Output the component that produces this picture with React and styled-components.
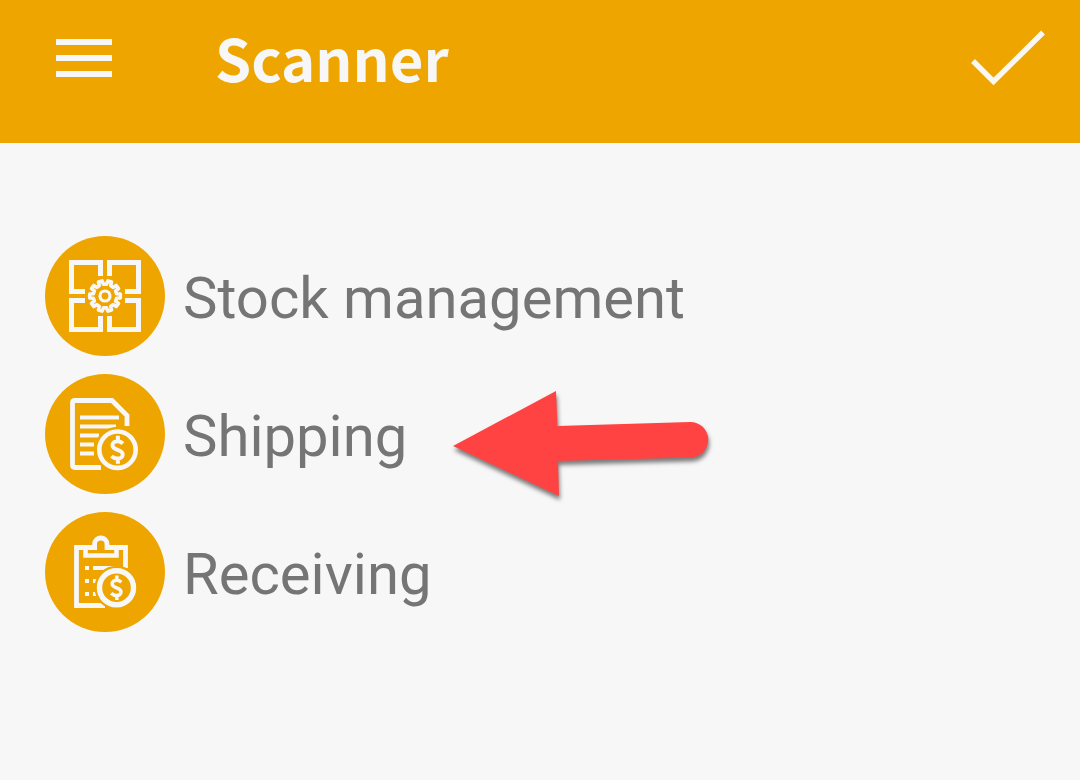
import React from "react";
import styled, { createGlobalStyle } from "styled-components";

const amber = "#efa500";
const paper = "#f7f7f7";

const GlobalStyle = createGlobalStyle`
  *, *::before, *::after { box-sizing: border-box; }
  body { margin: 0; background: ${paper}; }
`;

const Page = styled.div`
  min-height: 100vh;
  background: ${paper};
  font-family: Roboto, sans-serif;
`;

const TopBar = styled.header`
  display: flex;
  align-items: flex-start;
  min-height: 143px;
  padding: 16px 32px 0 44px;
  background: ${amber};
  color: ${paper};
`;

const IconButton = styled.button`
  display: flex;
  align-items: center;
  justify-content: center;
  width: 80px;
  height: 84px;
  padding: 0;
  border: 0;
  background: none;
  color: inherit;
  cursor: pointer;
`;

const Title = styled.h1`
  flex: 1;
  margin: 0;
  padding-left: 91px;
  font: 700 58px/82px "Noto Sans CJK JP", sans-serif;
`;

const Menu = styled.ul`
  display: flex;
  flex-direction: column;
  gap: 18px;
  margin: 0;
  padding: 93px 45px;
  list-style: none;
`;

const MenuItem = styled.li`
  display: flex;
  align-items: center;
  gap: 46px;
`;

const MenuLink = styled.a`
  display: flex;
  align-items: center;
  gap: 18px;
  color: #757575;
  font-size: 58px;
  line-height: 120px;
  text-decoration: none;
`;

const Badge = styled.span`
  display: block;
  width: 120px;
  height: 120px;
  border-radius: 50%;
  background: ${amber};
`;

const Label = styled.span`
  padding-top: 4px;
  line-height: 116px;
`;

const Pointer = styled.svg`
  flex: none;
  overflow: visible;
  filter: drop-shadow(1px 4px 2px rgba(0, 0, 0, 0.5));
`;

function gearPath(cx, cy, teeth, outer, inner) {
  const step = (Math.PI * 2) / teeth;
  const points = [];
  for (let i = 0; i < teeth; i += 1) {
    const a = i * step;
    [
      [-0.3, inner],
      [-0.2, outer],
      [0.2, outer],
      [0.3, inner],
    ].forEach(([f, r]) => {
      points.push(
        `${(cx + r * Math.cos(a + f * step)).toFixed(2)} ${(cy + r * Math.sin(a + f * step)).toFixed(2)}`
      );
    });
  }
  return `M${points.join("L")}Z`;
}

const Glyph = ({ children }) => (
  <svg width="120" height="120" viewBox="0 0 120 120" fill="none" stroke={paper} strokeWidth="5" aria-hidden="true">
    {children}
  </svg>
);

const StockIcon = () => (
  <Glyph>
    <path d="M40 55.5H26.5V26.5H55.5V40M64.5 40V26.5H93.5V55.5H80M40 64.5H26.5V93.5H55.5V80M64.5 80V93.5H93.5V64.5H80" />
    <path d={gearPath(60, 60, 10, 15.4, 11.8)} strokeWidth="3.6" strokeLinejoin="round" />
    <circle cx="60" cy="60" r="5" strokeWidth="3.2" />
  </Glyph>
);

const Coin = ({ cx, cy, r, halo, ring, scale }) => (
  <g>
    <circle cx={cx} cy={cy} r={halo} fill={amber} stroke="none" />
    <circle cx={cx} cy={cy} r={r} strokeWidth={ring} />
    <path
      transform={`translate(${cx} ${cy}) scale(${scale})`}
      d="M5.5 -6.2C3.5 -8 1.6 -8.4 0 -8.4C-3 -8.4 -5 -6.8 -5 -4.5C-5 1 5.2 -0.8 5.2 4.7C5.2 7.3 3 8.9 0 8.9C-2.2 8.9 -4.2 8.2 -6 6.4M0.4 -14V-8M0.4 8.5V14"
      strokeWidth="4"
    />
  </g>
);

const ShippingIcon = () => (
  <Glyph>
    <path d="M82 52V41.5L67 26.5H30Q27.5 26.5 27.5 29V91Q27.5 93.5 30 93.5H56" strokeWidth="4.8" />
    <path d="M35 43.5H74M35 52.5H71M35 61.5H54M35 70.5H49M35 79.5H49" strokeWidth="4" />
    <Coin cx={72.5} cy={75.7} r={18.2} halo={23} ring={4.6} scale={1} />
  </Glyph>
);

const ReceivingIcon = () => (
  <Glyph>
    <path d="M80.5 56V35.5H62V32A6.2 6 0 0 0 49.6 32V35.5H31.5V93.5H60" strokeWidth="4.8" />
    <path d="M40.5 35.5V43.5H71.5V35.5" strokeWidth="4.6" />
    <path d="M40 56H44M48 56H70M40 69H44M48 69H56M40 82H44M48 82H53" strokeWidth="4" />
    <Coin cx={71.5} cy={75.7} r={17} halo={22} ring={5.4} scale={0.88} />
  </Glyph>
);

const entries = [
  { label: "Stock management", Icon: StockIcon },
  { label: "Shipping", Icon: ShippingIcon, pointed: true },
  { label: "Receiving", Icon: ReceivingIcon },
];

export default function App() {
  return (
    <Page>
      <GlobalStyle />
      <TopBar>
        <IconButton type="button" aria-label="Open menu">
          <svg width="56" height="38" viewBox="0 0 56 38" fill="currentColor" aria-hidden="true">
            <path d="M0 0H56V6H0ZM0 16H56V22H0ZM0 32H56V38H0Z" />
          </svg>
        </IconButton>
        <Title>Scanner</Title>
        <IconButton type="button" aria-label="Confirm">
          <svg width="74" height="56" viewBox="0 0 74 56" fill="none" stroke="currentColor" strokeWidth="5.4" aria-hidden="true">
            <path d="M2 31L22.5 51.5L72 2.5" />
          </svg>
        </IconButton>
      </TopBar>
      <nav aria-label="Scanner">
        <Menu>
          {entries.map(({ label, Icon, pointed }) => (
            <MenuItem key={label}>
              <MenuLink href="#">
                <Badge>
                  <Icon />
                </Badge>
                <Label>{label}</Label>
              </MenuLink>
              {pointed && (
                <Pointer width="256" height="120" viewBox="0 0 256 120" aria-hidden="true">
                  <path d="M0 72L103 17L104.5 52L237 48A17.7 17.7 0 0 1 238 83.5L105 87L106 122Z" fill="#ff4343" />
                </Pointer>
              )}
            </MenuItem>
          ))}
        </Menu>
      </nav>
    </Page>
  );
}
